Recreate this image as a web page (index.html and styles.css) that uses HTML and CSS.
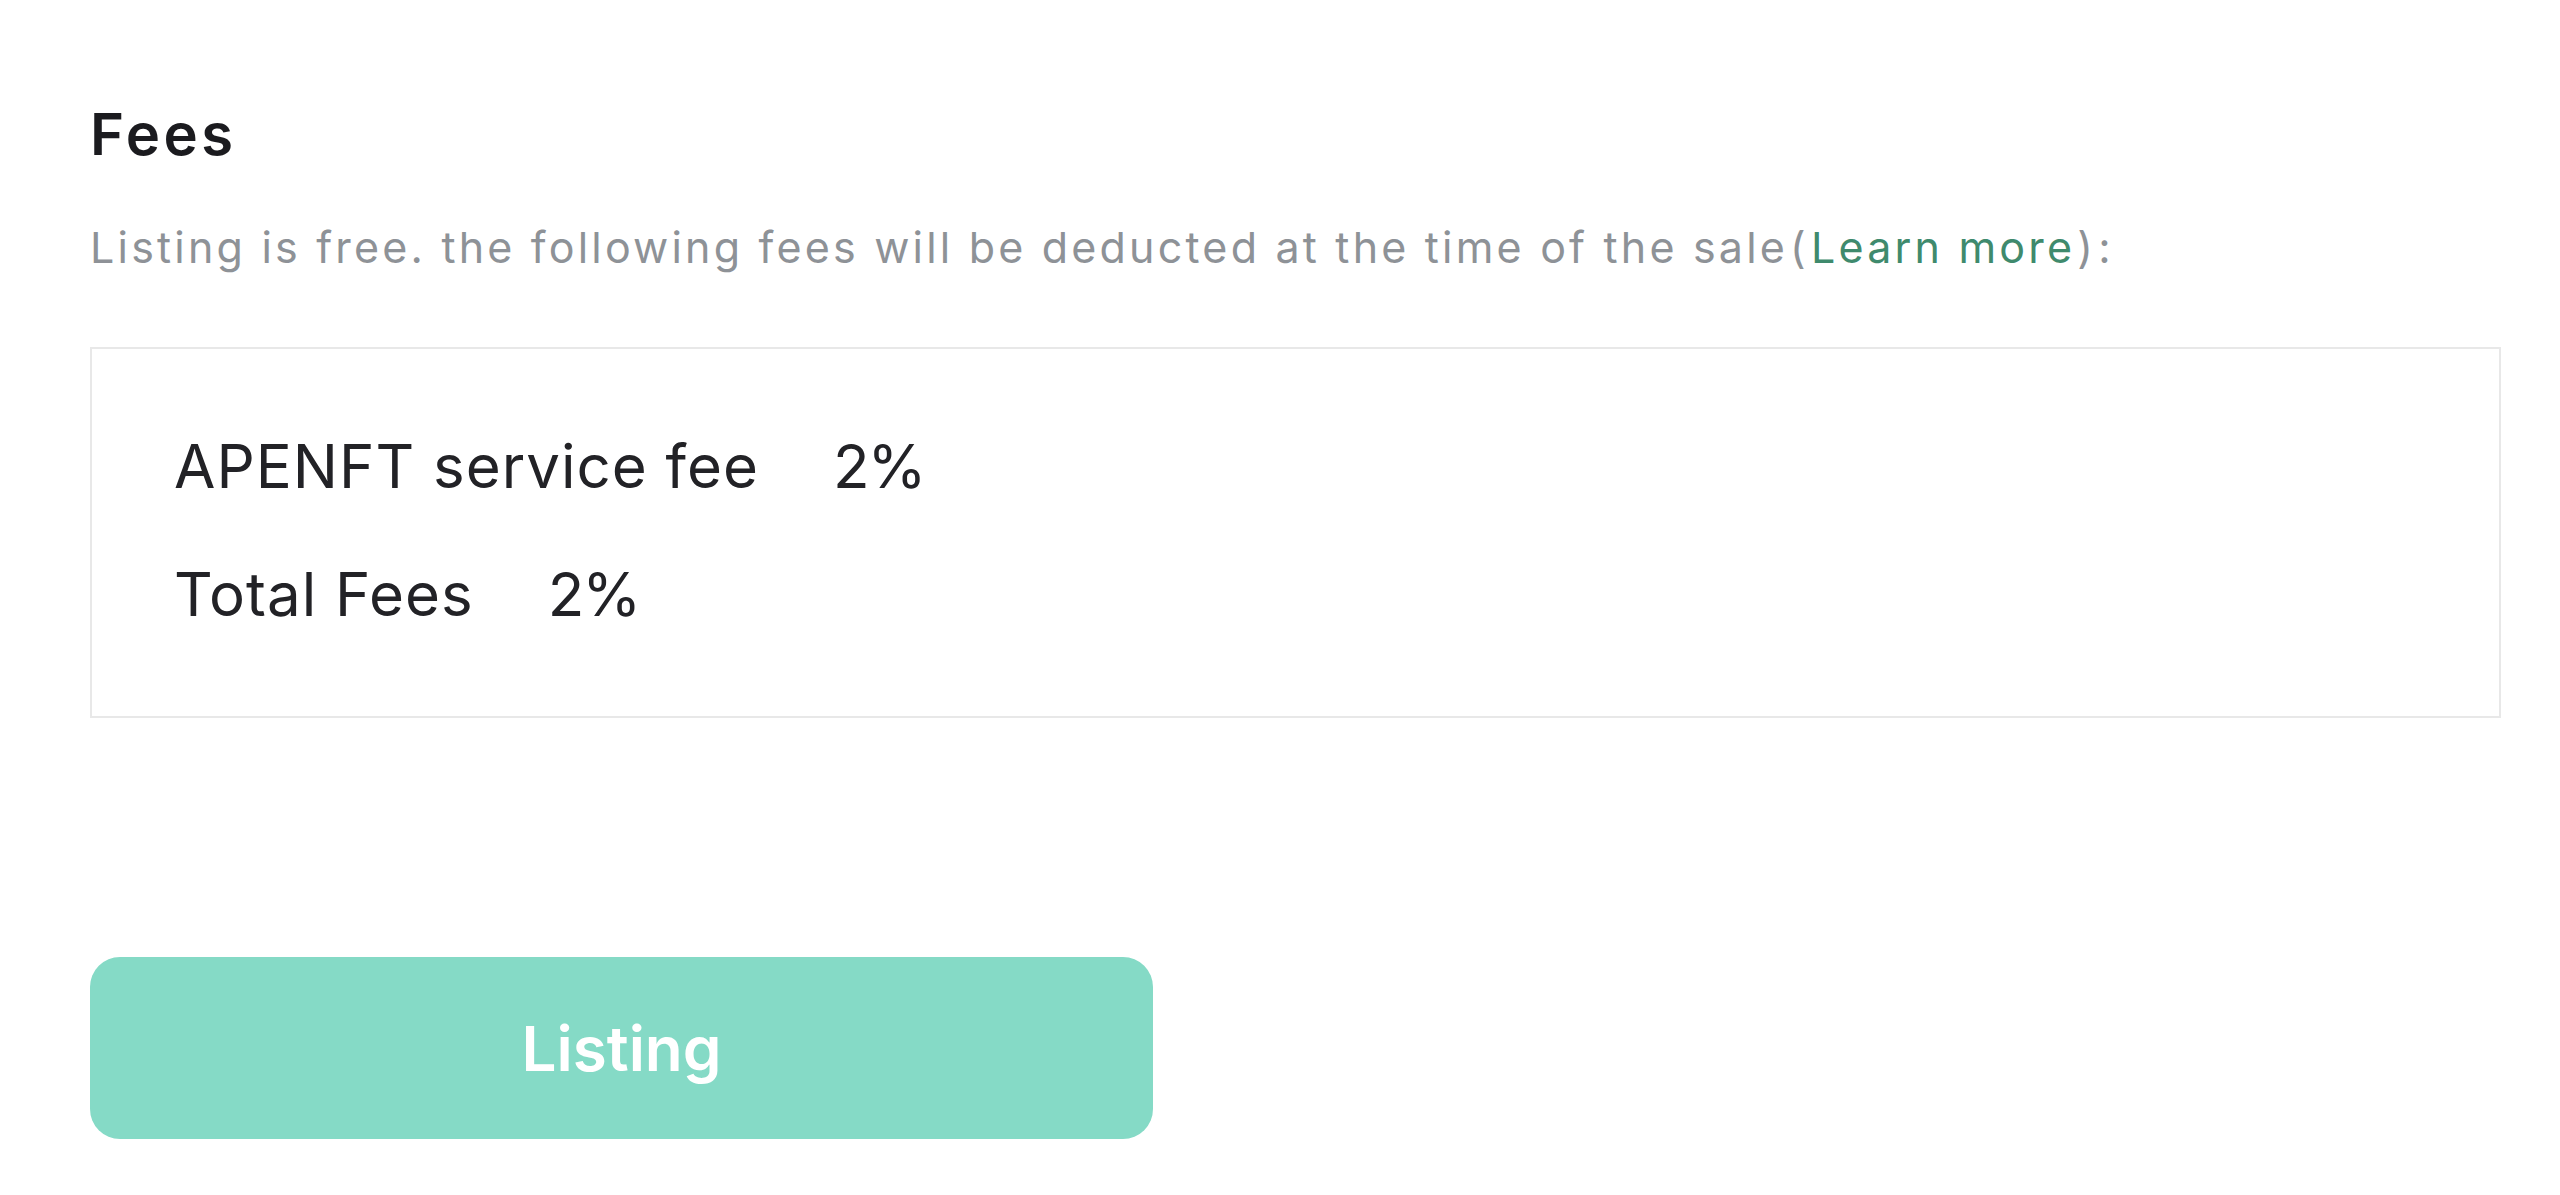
FILE: index.html
```html
<!DOCTYPE html>
<html lang="en">
<head>
<meta charset="utf-8">
<title>Fees</title>
<link rel="stylesheet" href="styles.css">
</head>
<body>
<main class="page">
  <section class="fees">
    <h2 class="fees-title">Fees</h2>
    <p class="fees-desc">Listing is free. the following fees will be deducted at the time of the sale<span class="paren">(</span><a class="learn" href="#">Learn more</a><span class="paren">)</span>:</p>
    <div class="fees-box">
      <div class="fee-row"><span class="fee-label">APENFT service fee</span><span class="fee-value">2%</span></div>
      <div class="fee-row"><span class="fee-label">Total Fees</span><span class="fee-value">2%</span></div>
    </div>
  </section>
  <button class="listing-btn" type="button">Listing</button>
</main>
</body>
</html>
```
FILE: styles.css
```css
html, body {
  margin: 0;
  padding: 0;
  background: #ffffff;
}

body {
  font-family: Inter, "Noto Sans", sans-serif;
  color: #1c1c20;
}

.page {
  padding: 105px 59px 0 90px;
  display: flex;
  flex-direction: column;
  align-items: flex-start;
}

.fees {
  align-self: stretch;
  display: flex;
  flex-direction: column;
}

.fees-title {
  margin: 0;
  font-size: 58px;
  line-height: 58px;
  font-weight: 600;
  letter-spacing: 3.5px;
  color: #1b1b1f;
}

.fees-desc {
  margin: 63px 0 0 0;
  font-size: 43px;
  line-height: 43px;
  font-weight: 400;
  letter-spacing: 3.2px;
  color: #8e9297;
  white-space: nowrap;
}

.paren {
  color: #8e9297;
  margin: 0 2px;
}

.learn {
  color: #3f8a6d;
  text-decoration: none;
}

.fees-box {
  margin-top: 78px;
  border: 2px solid #e8e8e8;
  padding: 87px 82px 92px 82px;
  display: flex;
  flex-direction: column;
  gap: 68px;
}

.fee-row {
  display: flex;
  align-items: baseline;
  font-size: 60px;
  line-height: 60px;
  letter-spacing: 1px;
  color: #222226;
}

.fee-value {
  margin-left: 74px;
  letter-spacing: -2px;
}

.listing-btn {
  margin-top: 239px;
  width: 1063px;
  height: 182px;
  border: none;
  border-radius: 30px;
  background: #85dac6;
  color: #ffffff;
  font-family: Inter, "Noto Sans", sans-serif;
  font-size: 62px;
  font-weight: 600;
  display: flex;
  align-items: center;
  justify-content: center;
  padding: 0;
}
```
